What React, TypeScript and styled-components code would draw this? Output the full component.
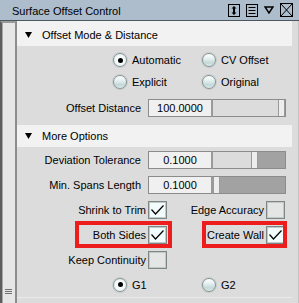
import React from "react";
import styled, { createGlobalStyle } from "styled-components";

const Global = createGlobalStyle`
  html, body { margin: 0; padding: 0; background: #dcdcdc; }
  body { font-family: "Liberation Sans", Arial, sans-serif; font-size: 11px; color: #000; }
  * { box-sizing: border-box; }
`;

const Window = styled.div`
  width: 299px;
  height: 303px;
  display: flex;
  flex-direction: column;
  overflow: hidden;
  background: #dcdcdc;
`;

const TitleBar = styled.div`
  height: 21px;
  flex: none;
  display: flex;
  align-items: center;
  background: #adbdcb;
  border-bottom: 1px solid #4e5660;
  padding: 0 6px 0 12px;
`;

const Title = styled.span`
  flex: 1;
  font-size: 11px;
  line-height: 20px;
  padding-top: 1px;
`;

const TitleIcons = styled.div`
  display: flex;
  align-items: center;
  gap: 6px;
`;

const Icon = styled.svg`
  display: block;
  flex: none;
`;

const Main = styled.div`
  flex: 1;
  display: flex;
  min-height: 0;
`;

const Gutter = styled.div`
  width: 17px;
  flex: none;
  display: flex;
  flex-direction: column;
  justify-content: flex-end;
  align-items: center;
  background: #e6e6e6;
  border-left: 2px solid #5e5e5e;
  border-right: 2px solid #8c8c8c;
  border-top: 2px solid #9a9a9a;
  box-shadow: inset 1px 0 #a8a8a8;
  padding-bottom: 9px;
`;

const Grip = styled.div`
  width: 7px;
  height: 5px;
  border-top: 1px solid #707070;
  border-bottom: 1px solid #707070;
  position: relative;
  &::after {
    content: "";
    position: absolute;
    left: 0;
    right: 0;
    top: 1px;
    border-top: 1px solid #707070;
  }
`;

const Content = styled.div`
  flex: 1;
  display: flex;
  flex-direction: column;
  padding-right: 6px;
  border-right: 1px solid #c4c4c4;
`;

const SectionHeader = styled.div<{ $first?: boolean }>`
  height: ${(p) => (p.$first ? 25 : 22)}px;
  padding-top: ${(p) => (p.$first ? 3 : 0)}px;
  flex: none;
  display: flex;
  align-items: center;
  gap: 10px;
  padding-left: 8px;
  background: #f2f2f2;
`;

const SectionBody = styled.div<{ $pt: number; $pb: number }>`
  display: flex;
  flex-direction: column;
  padding-top: ${(p) => p.$pt}px;
  padding-bottom: ${(p) => p.$pb}px;
`;

const RadioRow = styled.div<{ $h: number }>`
  height: ${(p) => p.$h}px;
  display: grid;
  grid-template-columns: 89px 1fr;
  align-items: center;
  padding-left: 96px;
`;

const RadioItem = styled.label`
  display: flex;
  align-items: center;
  gap: 5px;
`;

const RadioCircle = styled.span<{ $on?: boolean }>`
  width: 14px;
  height: 14px;
  border-radius: 50%;
  flex: none;
  display: flex;
  align-items: center;
  justify-content: center;
  border: 1px solid #8a9494;
  background: ${(p) =>
    p.$on
      ? "radial-gradient(circle at 50% 50%, #ffffff 0, #f4fafa 50%, #d8e6e6 100%)"
      : "linear-gradient(180deg, #ffffff 0%, #e6f2f2 35%, #c4d8d8 75%, #dcecec 100%)"};
  box-shadow: 0 0 0 1px #c8cccc;
  &::after {
    content: "";
    display: ${(p) => (p.$on ? "block" : "none")};
    width: 5px;
    height: 5px;
    border-radius: 50%;
    background: #000;
  }
`;

const FieldRow = styled.div<{ $h: number }>`
  height: ${(p) => p.$h}px;
  display: flex;
  align-items: center;
`;

const Label = styled.span<{ $w?: number }>`
  width: ${(p) => (p.$w ? `${p.$w}px` : "auto")};
  text-align: right;
  white-space: nowrap;
`;

const FieldLabel = styled(Label)`
  width: 124px;
  margin-right: 7px;
`;

const Field = styled.div`
  width: 65px;
  height: 18px;
  display: flex;
  align-items: center;
  justify-content: center;
  background: #f0f0f0;
  border: 1px solid #8c8c8c;
  border-right-width: 2px;
  border-right-color: #9a9a9a;
`;

const Slider = styled.div`
  width: 73px;
  height: 18px;
  display: flex;
  border: 1px solid #8c8c8c;
  border-left: none;
`;

const Track = styled.div`
  background: #dcdcdc;
  flex: none;
`;

const Handle = styled.div`
  width: 7px;
  flex: none;
  background: #ededed;
  border-left: 1px solid #9a9a9a;
  border-right: 1px solid #9a9a9a;
`;

const Rest = styled.div`
  flex: 1;
  background: #a2a2a2;
`;

const CheckRow = styled.div`
  height: 25px;
  display: grid;
  grid-template-columns: 150px 119px;
  align-items: stretch;
`;

const CheckCell = styled.div<{ $pr?: number }>`
  position: relative;
  display: flex;
  align-items: center;
  justify-content: flex-end;
  gap: 2px;
  padding-right: ${(p) => p.$pr ?? 0}px;
`;

const Box = styled.span<{ $on?: boolean }>`
  width: 19px;
  height: 18px;
  flex: none;
  display: flex;
  align-items: center;
  justify-content: center;
  border: 1px solid #7e8686;
  box-shadow: inset 0 0 0 1px #c0c8c8;
  background: ${(p) => (p.$on ? "#f2fcfc" : "#e4e6e6")};
`;

const Highlight = styled.span<{ $l: number; $r: number }>`
  position: absolute;
  left: ${(p) => p.$l}px;
  right: ${(p) => p.$r}px;
  top: -1px;
  bottom: -1px;
  border: 4px solid #ee1d1d;
  pointer-events: none;
`;

const BottomStrip = styled.div`
  flex: 1;
  border-top: 1px solid #eaeaea;
`;

const Tri = () => (
  <Icon width="7" height="6" viewBox="0 0 7 6">
    <polygon points="0,0 7,0 3.5,6" fill="#000" />
  </Icon>
);

const Check = () => (
  <Icon width="15" height="12" viewBox="0 0 15 12">
    <polyline points="1.5,5.5 5.5,10 13.5,1.5" fill="none" stroke="#000" strokeWidth="1.2" />
  </Icon>
);

const Radio = ({ on, label }: { on?: boolean; label: string }) => (
  <RadioItem>
    <RadioCircle $on={on} />
    <span>{label}</span>
  </RadioItem>
);

const SliderBar = ({ pos }: { pos: number }) => (
  <Slider>
    <Track style={{ width: pos }} />
    <Handle />
    <Rest />
  </Slider>
);

export default function App() {
  return (
    <>
      <Global />
      <Window>
        <TitleBar>
          <Title>Surface Offset Control</Title>
          <TitleIcons>
            <Icon width="12" height="13" viewBox="0 0 12 13">
              <rect x="0.5" y="0.5" width="11" height="12" fill="none" stroke="#000" />
              <path d="M6 2 L8.5 4.5 H3.5 Z M6 11 L8.5 8.5 H3.5 Z" fill="#000" />
              <rect x="5" y="4" width="2" height="5" fill="#000" />
            </Icon>
            <Icon width="12" height="13" viewBox="0 0 12 13">
              <rect x="0.5" y="0.5" width="11" height="12" fill="none" stroke="#000" />
              <path d="M2.5 3.5 H9.5 M2.5 6.5 H9.5 M2.5 9.5 H9.5" stroke="#000" />
            </Icon>
            <Icon width="10" height="8" viewBox="0 0 10 8">
              <polygon points="1,1 9,1 5,7" fill="none" stroke="#000" strokeWidth="1.5" strokeLinejoin="miter" />
            </Icon>
            <Icon width="13" height="14" viewBox="0 0 13 14">
              <rect x="0.5" y="0.5" width="12" height="13" fill="none" stroke="#000" />
              <path d="M1 1 L12 13 M12 1 L1 13" stroke="#000" />
            </Icon>
          </TitleIcons>
        </TitleBar>
        <Main>
          <Gutter>
            <Grip />
          </Gutter>
          <Content>
            <SectionHeader $first>
              <Tri />
              <span>Offset Mode &amp; Distance</span>
            </SectionHeader>
            <SectionBody $pt={3} $pb={2}>
              <RadioRow $h={22}>
                <Radio on label="Automatic" />
                <Radio label="CV Offset" />
              </RadioRow>
              <RadioRow $h={22}>
                <Radio label="Explicit" />
                <Radio label="Original" />
              </RadioRow>
              <FieldRow $h={30}>
                <FieldLabel>Offset Distance</FieldLabel>
                <Field>100.0000</Field>
                <SliderBar pos={65} />
              </FieldRow>
            </SectionBody>
            <SectionHeader>
              <Tri />
              <span>More Options</span>
            </SectionHeader>
            <SectionBody $pt={0} $pb={0}>
              <FieldRow $h={25}>
                <FieldLabel>Deviation Tolerance</FieldLabel>
                <Field>0.1000</Field>
                <SliderBar pos={38} />
              </FieldRow>
              <FieldRow $h={25}>
                <FieldLabel>Min. Spans Length</FieldLabel>
                <Field>0.1000</Field>
                <SliderBar pos={0} />
              </FieldRow>
              <CheckRow>
                <CheckCell>
                  <Label>Shrink to Trim</Label>
                  <Box $on>
                    <Check />
                  </Box>
                </CheckCell>
                <CheckCell $pr={1}>
                  <Label>Edge Accuracy</Label>
                  <Box />
                </CheckCell>
              </CheckRow>
              <CheckRow>
                <CheckCell>
                  <Label>Both Sides</Label>
                  <Box $on>
                    <Check />
                  </Box>
                  <Highlight $l={58} $r={-5} />
                </CheckCell>
                <CheckCell $pr={1}>
                  <Label>Create Wall</Label>
                  <Box $on>
                    <Check />
                  </Box>
                  <Highlight $l={35} $r={-1} />
                </CheckCell>
              </CheckRow>
              <CheckRow>
                <CheckCell>
                  <Label>Keep Continuity</Label>
                  <Box />
                </CheckCell>
                <CheckCell />
              </CheckRow>
              <RadioRow $h={25}>
                <Radio on label="G1" />
                <Radio label="G2" />
              </RadioRow>
            </SectionBody>
            <BottomStrip />
          </Content>
        </Main>
      </Window>
    </>
  );
}
